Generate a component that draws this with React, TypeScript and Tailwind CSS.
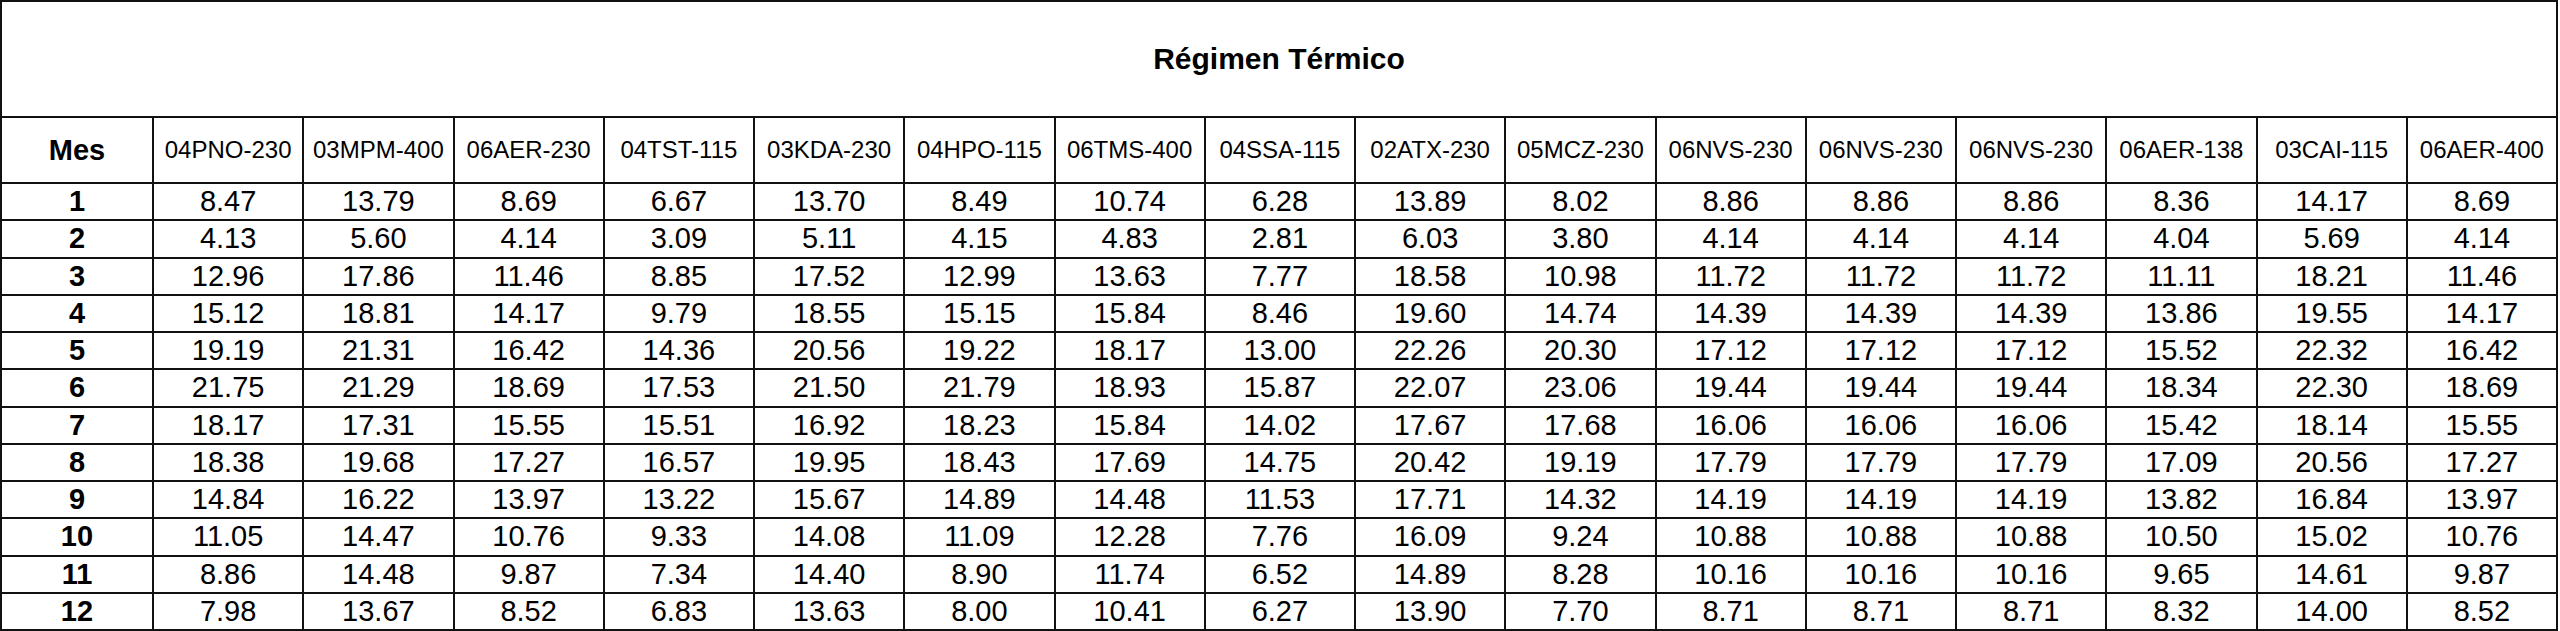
import React from "react";

const stations = [
  "04PNO-230",
  "03MPM-400",
  "06AER-230",
  "04TST-115",
  "03KDA-230",
  "04HPO-115",
  "06TMS-400",
  "04SSA-115",
  "02ATX-230",
  "05MCZ-230",
  "06NVS-230",
  "06NVS-230",
  "06NVS-230",
  "06AER-138",
  "03CAI-115",
  "06AER-400",
];

const rows: string[][] = [
  ["8.47", "13.79", "8.69", "6.67", "13.70", "8.49", "10.74", "6.28", "13.89", "8.02", "8.86", "8.86", "8.86", "8.36", "14.17", "8.69"],
  ["4.13", "5.60", "4.14", "3.09", "5.11", "4.15", "4.83", "2.81", "6.03", "3.80", "4.14", "4.14", "4.14", "4.04", "5.69", "4.14"],
  ["12.96", "17.86", "11.46", "8.85", "17.52", "12.99", "13.63", "7.77", "18.58", "10.98", "11.72", "11.72", "11.72", "11.11", "18.21", "11.46"],
  ["15.12", "18.81", "14.17", "9.79", "18.55", "15.15", "15.84", "8.46", "19.60", "14.74", "14.39", "14.39", "14.39", "13.86", "19.55", "14.17"],
  ["19.19", "21.31", "16.42", "14.36", "20.56", "19.22", "18.17", "13.00", "22.26", "20.30", "17.12", "17.12", "17.12", "15.52", "22.32", "16.42"],
  ["21.75", "21.29", "18.69", "17.53", "21.50", "21.79", "18.93", "15.87", "22.07", "23.06", "19.44", "19.44", "19.44", "18.34", "22.30", "18.69"],
  ["18.17", "17.31", "15.55", "15.51", "16.92", "18.23", "15.84", "14.02", "17.67", "17.68", "16.06", "16.06", "16.06", "15.42", "18.14", "15.55"],
  ["18.38", "19.68", "17.27", "16.57", "19.95", "18.43", "17.69", "14.75", "20.42", "19.19", "17.79", "17.79", "17.79", "17.09", "20.56", "17.27"],
  ["14.84", "16.22", "13.97", "13.22", "15.67", "14.89", "14.48", "11.53", "17.71", "14.32", "14.19", "14.19", "14.19", "13.82", "16.84", "13.97"],
  ["11.05", "14.47", "10.76", "9.33", "14.08", "11.09", "12.28", "7.76", "16.09", "9.24", "10.88", "10.88", "10.88", "10.50", "15.02", "10.76"],
  ["8.86", "14.48", "9.87", "7.34", "14.40", "8.90", "11.74", "6.52", "14.89", "8.28", "10.16", "10.16", "10.16", "9.65", "14.61", "9.87"],
  ["7.98", "13.67", "8.52", "6.83", "13.63", "8.00", "10.41", "6.27", "13.90", "7.70", "8.71", "8.71", "8.71", "8.32", "14.00", "8.52"],
];

const cell = "flex items-center justify-center bg-white leading-none";

export default function App() {
  return (
    <div className="w-[2560px] h-[631px] bg-white text-black font-['Liberation_Sans',Arial,sans-serif]">
      <div className="grid w-[2558px] grid-cols-[150px_repeat(16,1fr)] grid-rows-[114px_64px_repeat(12,35.25px)] gap-[2px] bg-[#111] p-[2px]">
        <div className={`${cell} col-span-17 text-[30px] font-bold`}>Régimen Térmico</div>

        <div className={`${cell} text-[29px] font-bold`}>Mes</div>
        {stations.map((s, i) => (
          <div key={i} className={`${cell} text-[24px]`}>
            {s}
          </div>
        ))}

        {rows.map((r, ri) => (
          <React.Fragment key={ri}>
            <div className={`${cell} text-[29px] font-bold`}>{ri + 1}</div>
            {r.map((v, ci) => (
              <div key={ci} className={`${cell} text-[29px]`}>
                {v}
              </div>
            ))}
          </React.Fragment>
        ))}
      </div>
    </div>
  );
}
